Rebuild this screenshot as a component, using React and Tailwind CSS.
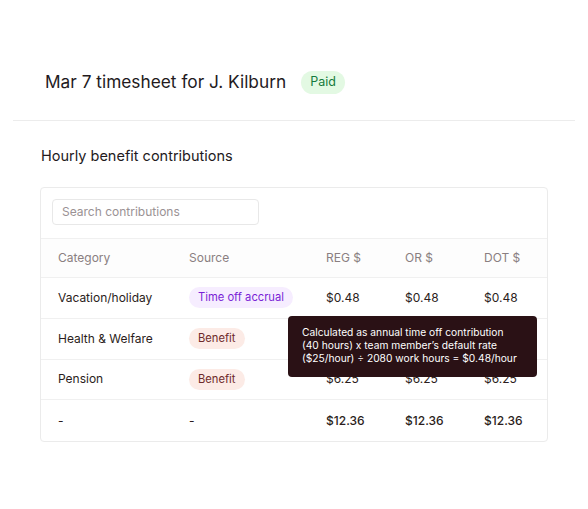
import React from "react";

const rows = [
  { cat: "Vacation/holiday", src: { label: "Time off accrual", kind: "purple" }, reg: "$0.48", or: "$0.48", dot: "$0.48" },
  { cat: "Health & Welfare", src: { label: "Benefit", kind: "red" }, reg: "$5.63", or: "$5.63", dot: "$5.63" },
  { cat: "Pension", src: { label: "Benefit", kind: "red" }, reg: "$6.25", or: "$6.25", dot: "$6.25" },
];

function Badge({ kind, children }) {
  const cls =
    kind === "purple"
      ? "bg-[#f6edff] text-[#7a1fd6]"
      : "bg-[#fcebe6] text-[#6e2a2a]";
  return (
    <span className={`inline-flex items-center h-[21px] px-[9px] rounded-full text-[11.2px] ${cls}`}>
      {children}
    </span>
  );
}

const gridCols = "grid grid-cols-[131px_137px_79px_79px_1fr] pl-[17px] items-center";

export default function App() {
  return (
    <div
      className="w-[588px] h-[509px] bg-white text-[#2b1d20] relative overflow-hidden"
      style={{ fontFamily: "Inter, 'Noto Sans', sans-serif" }}
    >
      <div className="pt-[70px] pl-[45px] flex items-center gap-[15px] h-[94px]">
        <h1 className="text-[17.3px] leading-[24px] text-[#231a1d]">Mar 7 timesheet for J. Kilburn</h1>
        <span className="inline-flex items-center h-[23px] px-[9px] rounded-full bg-[#e3f9e3] text-[#157a3d] text-[12.5px]">
          Paid
        </span>
      </div>
      <div className="mt-[26px] mx-[13px] border-t border-[#ececec]" />
      <h2 className="mt-[25px] ml-[41px] text-[14.5px] leading-[20px] text-[#231a1d]">Hourly benefit contributions</h2>
      <div className="mt-[21px] ml-[40px] w-[508px] border border-[#ebebeb] rounded-[4px] relative">
        <div className="pt-[11px] pl-[11px] pb-[13px]">
          <div className="w-[207px] h-[26px] border border-[#e8e8e8] rounded-[4px] flex items-center pl-[9px] text-[12px] text-[#9a9294]">
            Search contributions
          </div>
        </div>
        <div
          className={`${gridCols} h-[40px] border-y border-[#f0f0f0] bg-[#fdfdfd] bg-[radial-gradient(#f0f0f0_0.6px,transparent_0.7px)] bg-[size:4px_4px] text-[12px] text-[#8a7f81]`}
        >
          <div>Category</div>
          <div>Source</div>
          <div>REG $</div>
          <div>OR $</div>
          <div>DOT $</div>
        </div>
        {rows.map((r, i) => (
          <div key={i} className={`${gridCols} h-[40.75px] border-b border-[#f0f0f0] text-[12px] text-[#2b1d20]`}>
            <div>{r.cat}</div>
            <div>
              <Badge kind={r.src.kind}>{r.src.label}</Badge>
            </div>
            <div>{r.reg}</div>
            <div>{r.or}</div>
            <div>{r.dot}</div>
          </div>
        ))}
        <div className={`${gridCols} h-[40.5px] text-[12px] text-[#2b1d20]`}>
          <div>-</div>
          <div>-</div>
          <div className="font-medium">$12.36</div>
          <div className="font-medium">$12.36</div>
          <div className="font-medium">$12.36</div>
        </div>
        <div className="absolute left-[247px] top-[128px] w-[249px] h-[61px] rounded-[4px] bg-[#2a1115] text-white text-[10.25px] leading-[13px] pl-[14px] pt-[10px]">
          Calculated as annual time off contribution
          <br />
          (40 hours) x team member’s default rate
          <br />
          ($25/hour) ÷ 2080 work hours = $0.48/hour
        </div>
      </div>
    </div>
  );
}
